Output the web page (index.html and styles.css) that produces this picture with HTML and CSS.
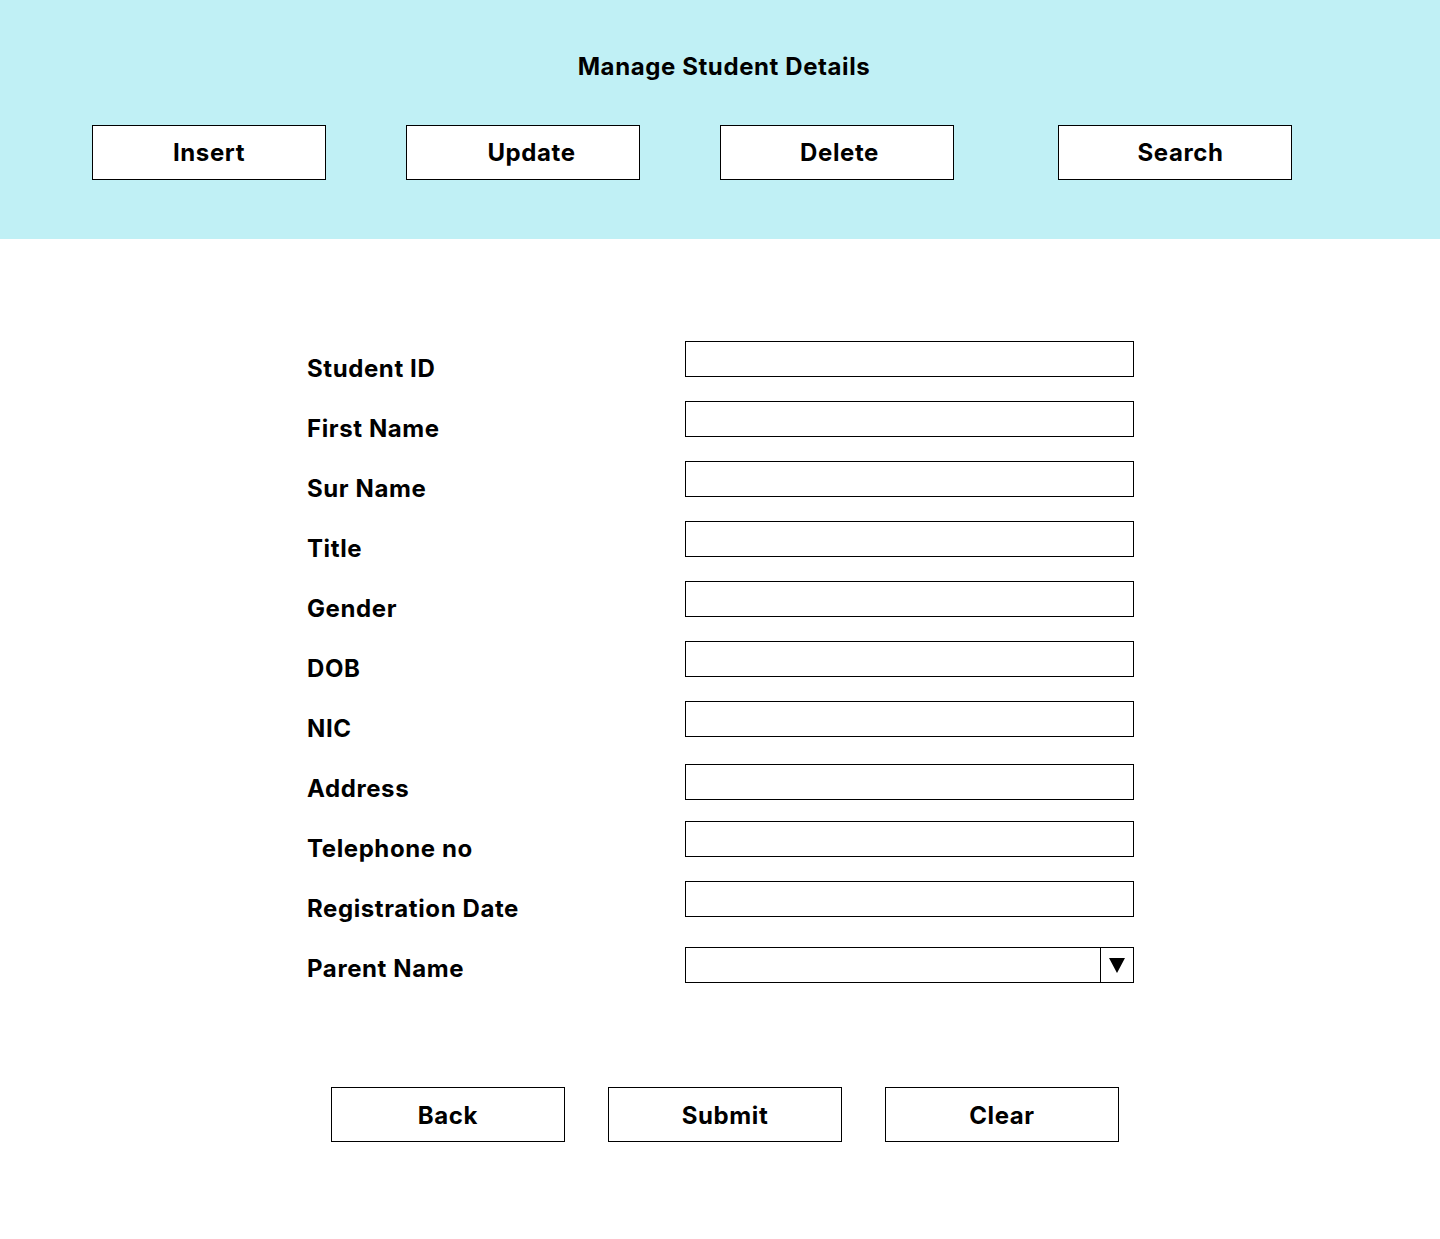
FILE: index.html
```html
<!DOCTYPE html>
<html lang="en">
<head>
<meta charset="utf-8">
<title>Manage Student Details</title>
<link rel="stylesheet" href="styles.css">
</head>
<body>
<header class="header">
  <h1 class="title">Manage Student Details</h1>
  <nav class="actions">
    <button class="btn">Insert</button>
    <button class="btn btn-update">Update</button>
    <button class="btn btn-delete">Delete</button>
    <button class="btn btn-search">Search</button>
  </nav>
</header>
<main class="form">
  <div class="row"><label class="label">Student ID</label><div class="field"></div></div>
  <div class="row"><label class="label">First Name</label><div class="field"></div></div>
  <div class="row"><label class="label">Sur Name</label><div class="field"></div></div>
  <div class="row"><label class="label">Title</label><div class="field"></div></div>
  <div class="row"><label class="label">Gender</label><div class="field"></div></div>
  <div class="row"><label class="label">DOB</label><div class="field"></div></div>
  <div class="row"><label class="label">NIC</label><div class="field"></div></div>
  <div class="row"><label class="label">Address</label><div class="field field-address"></div></div>
  <div class="row"><label class="label">Telephone no</label><div class="field"></div></div>
  <div class="row"><label class="label">Registration Date</label><div class="field"></div></div>
  <div class="row"><label class="label">Parent Name</label>
    <div class="field field-select">
      <span class="select-value"></span>
      <span class="select-arrow"><svg width="16" height="15" viewBox="0 0 16 15"><polygon points="0,0 16,0 8,15" fill="#000"/></svg></span>
    </div>
  </div>
  <div class="bottom-actions">
    <button class="btn">Back</button>
    <button class="btn">Submit</button>
    <button class="btn">Clear</button>
  </div>
</main>
</body>
</html>
```
FILE: styles.css
```css
* { box-sizing: border-box; }
html, body { margin: 0; padding: 0; }
body {
  font-family: Inter, "Noto Sans", "Liberation Sans", sans-serif;
  color: #000;
  background: #fff;
  width: 1440px;
  min-height: 1239px;
}
.header {
  background: #c0f0f5;
  height: 239px;
  padding-top: 52px;
}
.title {
  margin: 0;
  font-size: 24px;
  font-weight: 700;
  letter-spacing: 0.6px;
  line-height: 30px;
  text-align: center;
  padding-left: 8px;
}
.actions {
  display: flex;
  gap: 80px;
  padding-left: 92px;
  margin-top: 43px;
}
.btn {
  width: 234px;
  height: 55px;
  background: #fff;
  border: 1px solid #000;
  font-family: inherit;
  font-size: 24px;
  font-weight: 700;
  letter-spacing: 0.6px;
  color: #000;
  padding: 0;
  line-height: 1;
}
.btn-update { padding-left: 17px; }
.btn-delete { padding-left: 5px; }
.btn-search { margin-left: 24px; padding-left: 11px; }
.form {
  padding-top: 102px;
  padding-left: 307px;
}
.row {
  display: flex;
  height: 60px;
}
.label {
  width: 378px;
  font-size: 24px;
  font-weight: 700;
  letter-spacing: 0.6px;
  line-height: 30px;
  padding-top: 13px;
}
.field {
  width: 449px;
  height: 36px;
  border: 1px solid #000;
  background: #fff;
}
.field-address { margin-top: 3px; }
.field-select {
  margin-top: 6px;
  display: flex;
}
.select-value { flex: 1; }
.select-arrow {
  width: 33px;
  border-left: 1px solid #000;
  display: flex;
  align-items: center;
  justify-content: center;
}
.select-arrow svg { display: block; margin-top: 1px; }
.bottom-actions {
  display: flex;
  gap: 43px;
  margin-top: 86px;
  margin-left: 24px;
}
.bottom-actions .btn { padding-top: 2px; }
```
